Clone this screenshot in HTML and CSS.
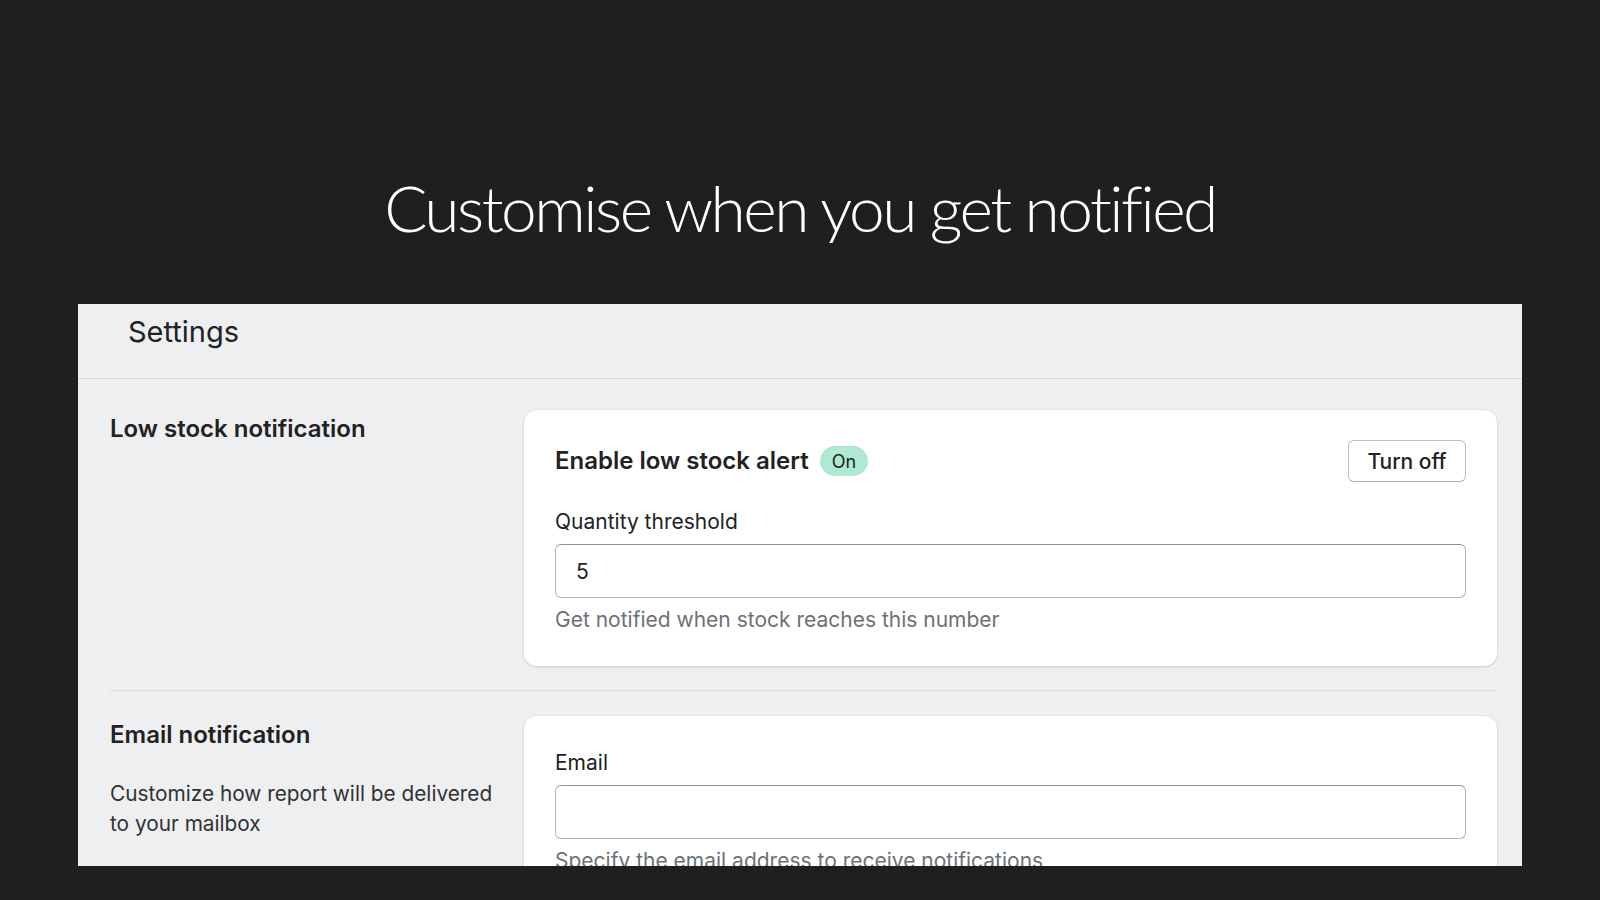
FILE: index.html
```html
<!DOCTYPE html>
<html lang="en">
<head>
<meta charset="utf-8">
<title>Customise when you get notified</title>
<link rel="stylesheet" href="styles.css">
</head>
<body>
  <header class="hero">
    <h1 class="hero-title">Customise when you get notified</h1>
  </header>
  <main class="panel">
    <div class="panel-header">
      <h2 class="panel-title">Settings</h2>
    </div>
    <div class="panel-body">
      <section class="section section-first">
        <div class="section-info">
          <h3 class="section-heading">Low stock notification</h3>
        </div>
        <div class="card">
          <div class="card-row">
            <div class="card-heading-group">
              <h4 class="card-heading">Enable low stock alert</h4>
              <span class="badge">On</span>
            </div>
            <button class="btn" type="button">Turn off</button>
          </div>
          <label class="field-label field-label-spaced" for="qty">Quantity threshold</label>
          <input class="field-input" id="qty" type="text" value="5">
          <p class="field-help">Get notified when stock reaches this number</p>
        </div>
      </section>
      <section class="section section-second">
        <div class="section-info">
          <h3 class="section-heading">Email notification</h3>
          <p class="section-desc">Customize how report will be delivered to your mailbox</p>
        </div>
        <div class="card card-email">
          <label class="field-label" for="email">Email</label>
          <input class="field-input" id="email" type="text" value="">
          <p class="field-help">Specify the email address to receive notifications</p>
        </div>
      </section>
    </div>
  </main>
</body>
</html>
```

FILE: styles.css
```css
* { box-sizing: border-box; }

html, body {
  margin: 0;
  padding: 0;
  background: #1f1f1f;
  height: 900px;
  overflow: hidden;
}

body {
  font-family: Inter, "Noto Sans", "Liberation Sans", sans-serif;
  color: #202223;
}

.hero {
  height: 304px;
  padding-top: 176px;
  text-align: center;
}

.hero-title {
  margin: 0;
  font-family: Lato, "Noto Sans", sans-serif;
  font-weight: 300;
  font-size: 64px;
  line-height: 1;
  color: #ffffff;
  letter-spacing: -2.5px;
}

.panel {
  margin: 0 78px;
  height: 562px;
  background: #eeeff1;
  overflow: hidden;
}

.panel-header {
  height: 75px;
  padding: 11px 0 0 50px;
  border-bottom: 1px solid #d6d7da;
}

.panel-title {
  margin: 0;
  font-size: 29px;
  line-height: 34px;
  font-weight: 400;
  color: #202223;
}

.panel-body {
  padding: 0 25px 0 32px;
}

.section {
  display: grid;
  grid-template-columns: 390px 1fr;
  column-gap: 24px;
}

.section-first {
  padding: 31px 0 24px;
  border-bottom: 1px solid #d9dadd;
}

.section-second {
  padding-top: 25px;
}

.section-heading {
  margin: 5px 0 0;
  font-size: 24px;
  line-height: 28px;
  font-weight: 600;
  color: #202223;
}

.section-desc {
  margin: 30px 0 0;
  font-size: 20.8px;
  line-height: 30px;
  color: #303234;
}

.card {
  background: #ffffff;
  border-radius: 13px;
  box-shadow: 0 1px 3px rgba(0, 0, 0, 0.12), 0 0 0 1px rgba(0, 0, 0, 0.02);
  padding: 30px 31px 34px;
}

.card-email {
  padding-top: 35px;
}

.card-row {
  display: flex;
  align-items: center;
  justify-content: space-between;
  height: 42px;
}

.card-heading-group {
  display: flex;
  align-items: center;
  gap: 11px;
}

.card-heading {
  margin: 0;
  font-size: 24px;
  line-height: 28px;
  font-weight: 600;
  color: #202223;
}

.badge {
  display: inline-flex;
  align-items: center;
  height: 30px;
  padding: 0 12px;
  border-radius: 15px;
  background: #aee9d1;
  font-size: 18px;
  color: #202223;
}

.btn {
  width: 118px;
  height: 42px;
  background: #ffffff;
  border: 1px solid #babfc3;
  border-bottom-color: #aeb4b9;
  border-radius: 6px;
  font-family: inherit;
  font-size: 21px;
  font-weight: 500;
  color: #202223;
  padding: 0;
}

.field-label {
  display: block;
  font-size: 21px;
  line-height: 24px;
  color: #202223;
}

.field-label-spaced {
  margin-top: 28px;
}

.field-input {
  display: block;
  width: 100%;
  height: 54px;
  margin-top: 10px;
  padding: 0 20px;
  border: 1px solid #aeb4b9;
  border-top-color: #8c9196;
  border-radius: 6px;
  font-family: inherit;
  font-size: 21px;
  color: #202223;
  background: #ffffff;
}

.field-help {
  margin: 10px 0 0;
  font-size: 21px;
  line-height: 24px;
  color: #6d7175;
}
```
